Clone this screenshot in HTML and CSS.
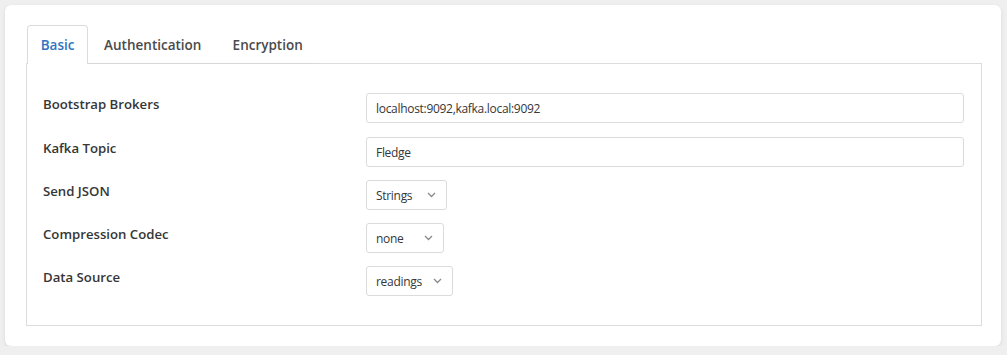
FILE: index.html
```html
<!DOCTYPE html>
<html>
<head>
<meta charset="utf-8">
<link rel="stylesheet" href="styles.css">
</head>
<body>
<div class="card">
  <ul class="tabs">
    <li class="tab active">Basic</li>
    <li class="tab">Authentication</li>
    <li class="tab">Encryption</li>
  </ul>
  <div class="panel">
    <div class="row">
      <div class="label">Bootstrap Brokers</div>
      <div class="control"><div class="input">localhost:9092,kafka.local:9092</div></div>
    </div>
    <div class="row">
      <div class="label">Kafka Topic</div>
      <div class="control"><div class="input">Fledge</div></div>
    </div>
    <div class="row">
      <div class="label">Send JSON</div>
      <div class="control"><div class="select sel-strings"><span>Strings</span><svg class="chev" width="9" height="6" viewBox="0 0 9 6"><polyline points="1,1 4.5,4.5 8,1" fill="none" stroke="#8a8a8a" stroke-width="1.3"/></svg></div></div>
    </div>
    <div class="row">
      <div class="label">Compression Codec</div>
      <div class="control"><div class="select sel-none"><span>none</span><svg class="chev" width="9" height="6" viewBox="0 0 9 6"><polyline points="1,1 4.5,4.5 8,1" fill="none" stroke="#8a8a8a" stroke-width="1.3"/></svg></div></div>
    </div>
    <div class="row">
      <div class="label">Data Source</div>
      <div class="control"><div class="select sel-readings"><span>readings</span><svg class="chev" width="9" height="6" viewBox="0 0 9 6"><polyline points="1,1 4.5,4.5 8,1" fill="none" stroke="#8a8a8a" stroke-width="1.3"/></svg></div></div>
    </div>
  </div>
</div>
</body>
</html>
```
FILE: styles.css
```css
html, body {
  margin: 0;
  padding: 0;
}
body {
  background: #efefef;
  font-family: "Open Sans", "Noto Sans", sans-serif;
  color: #363636;
  padding: 5px 6px 0 5px;
}
.card {
  background: #fff;
  border-radius: 6px;
  box-shadow: 0 2px 4px rgba(0,0,0,0.08), 0 0 1px rgba(0,0,0,0.06);
  height: 341px;
  box-sizing: border-box;
  padding: 20px 20px 0 21px;
}
.tabs {
  list-style: none;
  margin: 0 0 0 1px;
  padding: 0;
  display: flex;
  width: 291px;
  border-bottom: 1px solid #d8d8d8;
  position: relative;
  z-index: 1;
}
.tab {
  height: 37px;
  display: flex;
  align-items: center;
  justify-content: center;
  font-size: 13.5px;
  font-weight: 600;
  color: #4a4a4a;
  border: 1px solid transparent;
  border-bottom: none;
  border-radius: 4px 4px 0 0;
  margin-bottom: -1px;
  padding-bottom: 1px;
  box-sizing: content-box;
}
.tab:nth-child(1) { width: 60px; }
.tab:nth-child(2) { width: 125px; padding-left: 2px; }
.tab:nth-child(3) { width: 100px; padding-left: 2px; }
.tab.active {
  color: #2f74c0;
  border-color: #dbdbdb;
  background: #fff;
}
.panel {
  border: 1px solid #dcdcdc;
  margin-top: -1px;
  width: 956px;
  height: 263px;
  box-sizing: border-box;
  padding: 29px 16px 0 16px;
  display: flex;
  flex-direction: column;
  gap: 13px;
}
.row {
  display: grid;
  grid-template-columns: 323px 1fr;
  align-items: start;
}
.row:first-child {
  margin-bottom: 1px;
}
.label {
  font-size: 13.2px;
  font-weight: 600;
  color: #363636;
  padding-top: 2px;
}
.control {
  display: flex;
}
.input, .select {
  height: 30px;
  box-sizing: border-box;
  border: 1px solid #dbdbdb;
  border-radius: 3px;
  font-size: 12px;
  letter-spacing: -0.3px;
  color: #363636;
  display: flex;
  align-items: center;
  padding: 0 9px;
}
.input {
  width: 598px;
}
.select {
  justify-content: space-between;
  padding-right: 10px;
}
.sel-strings { width: 81px; }
.sel-none { width: 78px; }
.sel-readings { width: 87px; }
```
